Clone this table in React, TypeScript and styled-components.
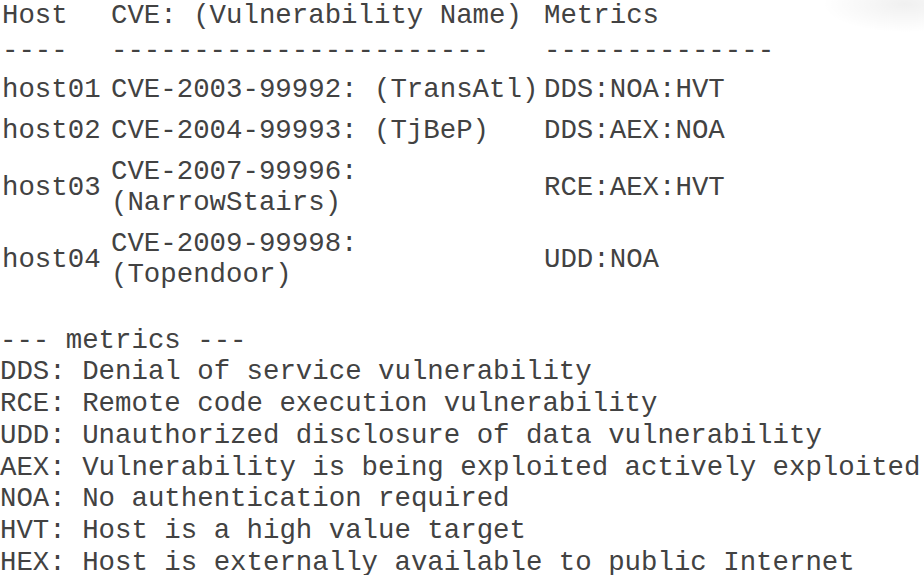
import React from "react";
import styled, { createGlobalStyle } from "styled-components";

const GlobalStyle = createGlobalStyle`
  html, body {
    margin: 0;
    padding: 0;
    background: #ffffff;
  }
  body {
    font-family: "Courier New", "Liberation Mono", monospace;
    color: #424242;
    overflow: hidden;
  }
`;

const Page = styled.main`
  width: 924px;
  height: 575px;
  overflow: hidden;
  display: flex;
  flex-direction: column;
  font-size: 27.4px;
  background:
    radial-gradient(ellipse 110px 38px at 905px 4px, rgba(0, 0, 0, 0.06), rgba(0, 0, 0, 0) 75%),
    #ffffff;
`;

const Table = styled.table`
  border-collapse: collapse;
  margin: 0 0 0 2px;
  font: inherit;
  color: inherit;
`;

const HeadCell = styled.th<{ $first?: boolean; $width?: number }>`
  padding: ${(p) => (p.$first ? "0 0 2px" : "2px 0 3px")};
  line-height: 31px;
  font-weight: normal;
  vertical-align: middle;
  white-space: pre;
  text-align: left;
  width: ${(p) => (p.$width ? `${p.$width}px` : "auto")};
`;

const Cell = styled.td`
  padding: 5px 0;
  line-height: 31px;
  vertical-align: middle;
  white-space: pre;
  text-align: left;
`;

const Line = styled.span`
  display: block;
`;

const Legend = styled.div`
  margin-top: 29.5px;
  display: flex;
  flex-direction: column;
`;

const LegendLine = styled.div`
  line-height: 31.8px;
  white-space: pre;
`;

type Row = { host: string; cve: string[]; metrics: string };

const rows: Row[] = [
  { host: "host01", cve: ["CVE-2003-99992: (TransAtl)"], metrics: "DDS:NOA:HVT" },
  { host: "host02", cve: ["CVE-2004-99993: (TjBeP)"], metrics: "DDS:AEX:NOA" },
  { host: "host03", cve: ["CVE-2007-99996:", "(NarrowStairs)"], metrics: "RCE:AEX:HVT" },
  { host: "host04", cve: ["CVE-2009-99998:", "(Topendoor)"], metrics: "UDD:NOA" },
];

const legend = [
  "--- metrics ---",
  "DDS: Denial of service vulnerability",
  "RCE: Remote code execution vulnerability",
  "UDD: Unauthorized disclosure of data vulnerability",
  "AEX: Vulnerability is being exploited actively exploited",
  "NOA: No authentication required",
  "HVT: Host is a high value target",
  "HEX: Host is externally available to public Internet",
];

export default function App() {
  return (
    <>
      <GlobalStyle />
      <Page>
        <Table>
          <thead>
            <tr>
              <HeadCell $first $width={109}>Host</HeadCell>
              <HeadCell $first $width={433}>CVE: (Vulnerability Name)</HeadCell>
              <HeadCell $first>Metrics</HeadCell>
            </tr>
            <tr>
              <HeadCell>----</HeadCell>
              <HeadCell>-----------------------</HeadCell>
              <HeadCell>--------------</HeadCell>
            </tr>
          </thead>
          <tbody>
            {rows.map((r) => (
              <tr key={r.host}>
                <Cell>{r.host}</Cell>
                <Cell>
                  {r.cve.map((c) => (
                    <Line key={c}>{c}</Line>
                  ))}
                </Cell>
                <Cell>{r.metrics}</Cell>
              </tr>
            ))}
          </tbody>
        </Table>
        <Legend>
          {legend.map((l) => (
            <LegendLine key={l}>{l}</LegendLine>
          ))}
        </Legend>
      </Page>
    </>
  );
}
